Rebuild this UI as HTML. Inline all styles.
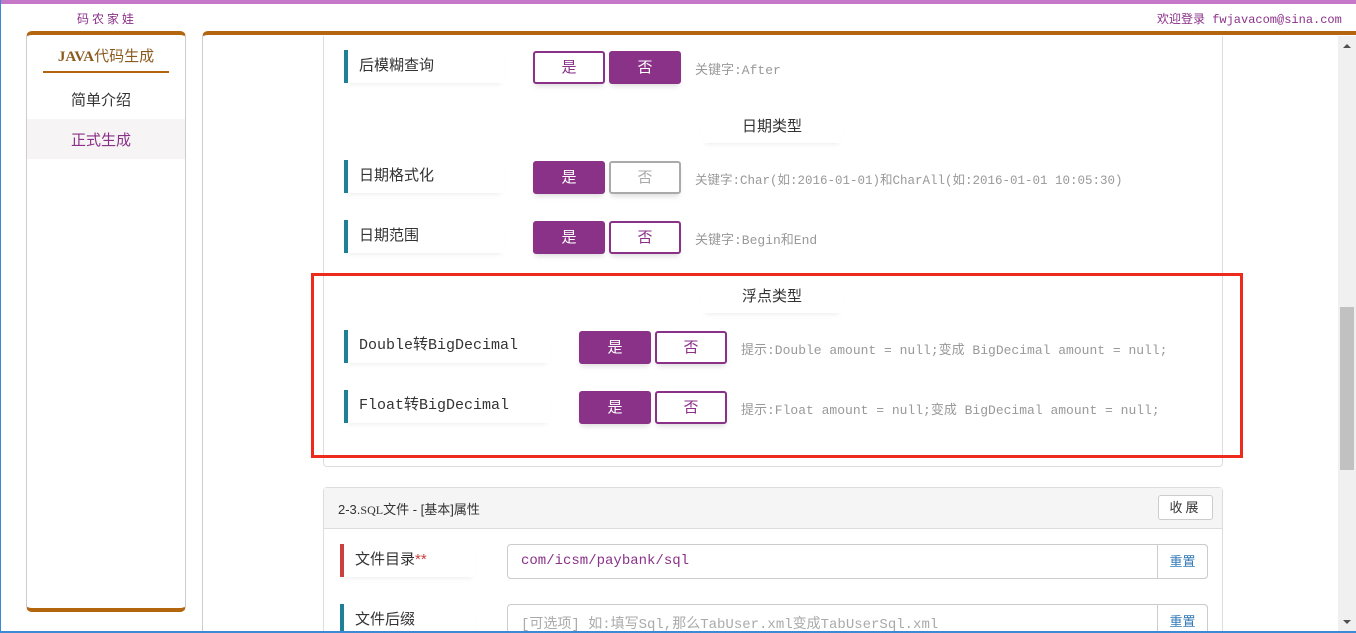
<!DOCTYPE html>
<html style="width:1356px;height:633px;overflow:hidden"><head><meta charset="utf-8">
<style>
*{margin:0;padding:0;box-sizing:border-box}
body{width:1356px;height:633px;overflow:hidden;background:#fff;position:relative;font-family:"Liberation Sans","Noto Sans CJK SC",sans-serif;color:#333}
.a{position:absolute}
.lbl{position:absolute;height:33px;border-left:4px solid #1f7f94;font-size:15px;line-height:31px;padding-left:11px;color:#333;box-shadow:0 4px 5px -3px rgba(0,0,0,.08)}
.mono{font-family:"Liberation Mono","Noto Sans CJK SC",monospace}
.btn{position:absolute;width:72px;height:33px;border-radius:3px;font-size:15px;line-height:29px;text-align:center;border:2px solid #8a3188;box-shadow:0 4px 6px -2px rgba(0,0,0,.15)}
.on{background:#8a3188;color:#fff}
.off{background:#fff;color:#8a3188}
.dis{background:#fff;color:#aaa;border-color:#aaa}
.hint{position:absolute;font-size:13px;color:#999;font-family:"Liberation Mono","Noto Sans CJK SC",monospace}
.sec{position:absolute;font-size:15px;color:#333;text-align:center;width:140px;box-shadow:0 4px 5px -3px rgba(0,0,0,.08);height:28px}
</style></head><body>
<div class="a" style="left:0;top:0;width:1356px;height:4px;background:#c678c8"></div>
<div class="a" style="left:0;top:0;width:1px;height:633px;background:#3c8ad6"></div>
<div class="a" style="left:77px;top:10px;font-size:12px;color:#8a3188;letter-spacing:3px">码农家娃</div>
<div class="a mono" style="left:1157px;top:10px;font-size:12px;color:#8a3188">欢迎登录 fwjavacom@sina.com</div>

<!-- sidebar -->
<div class="a" style="left:26px;top:31px;width:160px;height:581px;border:1px solid #ccc;border-top:4px solid #b4660e;border-bottom:4px solid #b4660e;border-radius:6px;background:#fff"></div>
<div class="a" style="left:26px;top:45px;width:160px;text-align:center;font-size:15px;color:#8b5a1e"><span style="font-family:'Liberation Serif',serif;font-weight:bold">JAVA</span>代码生成</div>
<div class="a" style="left:43px;top:71px;width:126px;height:2px;background:#b4660e"></div>
<div class="a" style="left:27px;top:89px;width:148px;text-align:center;font-size:15px;color:#333">简单介绍</div>
<div class="a" style="left:27px;top:119px;width:158px;height:40px;background:#f6f4f4"></div>
<div class="a" style="left:27px;top:129px;width:148px;text-align:center;font-size:15px;color:#8a3188">正式生成</div>

<!-- main -->
<div class="a" style="left:202px;top:31px;width:1160px;height:610px;border-left:1px solid #ccc;border-top:4px solid #b4660e;border-top-left-radius:6px"></div>
<div class="a" style="left:323px;top:36px;width:900px;height:431px;border:1px solid #ddd;border-top:none;border-radius:0 0 4px 4px"></div>

<div class="lbl" style="left:344px;top:50px;width:160px">后模糊查询</div>
<div class="btn off" style="left:533px;top:51px">是</div>
<div class="btn on" style="left:609px;top:51px">否</div>
<div class="hint" style="left:695px;top:59px">关键字:After</div>

<div class="sec" style="left:702px;top:115px">日期类型</div>

<div class="lbl" style="left:344px;top:160px;width:160px">日期格式化</div>
<div class="btn on" style="left:533px;top:161px">是</div>
<div class="btn dis" style="left:609px;top:161px">否</div>
<div class="hint" style="left:695px;top:169px;font-size:12.5px">关键字:Char(如:2016-01-01)和CharAll(如:2016-01-01 10:05:30)</div>

<div class="lbl" style="left:344px;top:220px;width:160px">日期范围</div>
<div class="btn on" style="left:533px;top:221px">是</div>
<div class="btn off" style="left:609px;top:221px">否</div>
<div class="hint" style="left:695px;top:229px">关键字:Begin和End</div>

<div class="sec" style="left:702px;top:285px">浮点类型</div>

<div class="lbl mono" style="left:344px;top:330px;width:205px;font-size:15px;color:#333">Double转BigDecimal</div>
<div class="btn on" style="left:579px;top:331px">是</div>
<div class="btn off" style="left:655px;top:331px">否</div>
<div class="hint" style="left:741px;top:339px">提示:Double amount = null;变成 BigDecimal amount = null;</div>

<div class="lbl mono" style="left:344px;top:390px;width:205px;font-size:15px;color:#333">Float转BigDecimal</div>
<div class="btn on" style="left:579px;top:391px">是</div>
<div class="btn off" style="left:655px;top:391px">否</div>
<div class="hint" style="left:741px;top:399px">提示:Float amount = null;变成 BigDecimal amount = null;</div>

<div class="a" style="left:311px;top:273px;width:932px;height:185px;border:3px solid #ee2a1c"></div>

<!-- section 2 -->
<div class="a" style="left:323px;top:487px;width:900px;height:160px;border:1px solid #ddd;border-radius:4px"></div>
<div class="a" style="left:324px;top:488px;width:898px;height:41px;background:#f5f5f5;border-bottom:1px solid #ddd"></div>
<div class="a" style="left:338px;top:499px;font-size:13px;color:#333">2-3.<span style="font-family:'Liberation Serif',serif;font-size:12px">SQL</span>文件 - [基本]属性</div>
<div class="a" style="left:1158px;top:495px;width:55px;height:25px;border:1px solid #ccc;border-radius:3px;background:#fff;font-size:13px;text-align:center;line-height:23px;letter-spacing:3px">收展</div>

<div class="lbl" style="left:340px;top:544px;width:135px;border-left-color:#c9403e">文件目录<span style="color:#c9403e">**</span></div>
<div class="a" style="left:507px;top:544px;width:701px;height:35px;border:1px solid #ccc;border-radius:4px"></div>
<div class="a mono" style="left:521px;top:553px;font-size:14px;color:#8a3188">com/icsm/paybank/sql</div>
<div class="a" style="left:1157px;top:544px;width:51px;height:35px;border:1px solid #ccc;border-radius:0 4px 4px 0;background:#fff;font-size:13px;color:#337ab7;text-align:center;line-height:33px">重置</div>

<div class="lbl" style="left:340px;top:604px;width:135px">文件后缀</div>
<div class="a" style="left:507px;top:604px;width:701px;height:35px;border:1px solid #ccc;border-radius:4px"></div>
<div class="a mono" style="left:521px;top:613px;font-size:14px;color:#aaa">[可选项]  如:填写Sql,那么TabUser.xml变成TabUserSql.xml</div>
<div class="a" style="left:1157px;top:604px;width:51px;height:35px;border:1px solid #ccc;border-radius:0 4px 4px 0;background:#fff;font-size:13px;color:#337ab7;text-align:center;line-height:33px">重置</div>

<!-- scrollbar -->
<div class="a" style="left:1338px;top:36px;width:18px;height:595px;background:#f0f0f0"></div>
<div class="a" style="left:1340px;top:307px;width:14px;height:163px;background:#c1c1c1"></div>
<div class="a" style="left:1343px;top:44px;width:0;height:0;border-left:4px solid transparent;border-right:4px solid transparent;border-bottom:4px solid #505050"></div>
<div class="a" style="left:1343px;top:620px;width:0;height:0;border-left:4px solid transparent;border-right:4px solid transparent;border-top:4px solid #505050"></div>
<div class="a" style="left:0;top:631px;width:1356px;height:2px;background:#3c8ad6"></div>
</body></html>
